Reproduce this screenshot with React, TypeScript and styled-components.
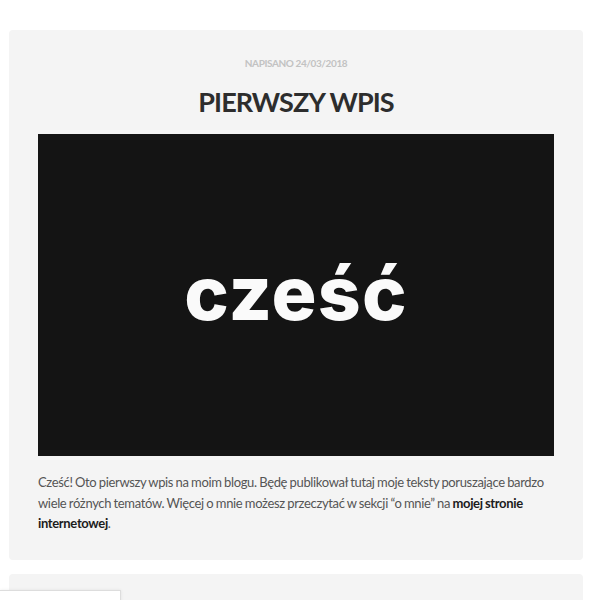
import React from "react";
import styled, { createGlobalStyle } from "styled-components";

const Global = createGlobalStyle`
  html, body { margin: 0; padding: 0; background: #fff; }
  body { font-family: Lato, "Open Sans", sans-serif; overflow: hidden; }
`;

const Page = styled.div`
  padding: 30px 17px 0 9px;
  display: flex;
  flex-direction: column;
  gap: 14px;
`;

const Card = styled.article`
  background: #f4f4f4;
  border-radius: 4px;
  padding: 26px 29px 26px;
`;

const EmptyCard = styled(Card)`
  height: 60px;
`;

const Meta = styled.div`
  text-align: center;
  font-family: Lato, sans-serif;
  font-weight: 700;
  font-size: 10px;
  letter-spacing: -0.4px;
  color: #c2c2c2;
  text-transform: uppercase;
  line-height: 14px;
`;

const Title = styled.h1`
  margin: 15px 0 15px;
  text-align: center;
  font-family: Lato, sans-serif;
  font-weight: 700;
  font-size: 27px;
  line-height: 34px;
  color: #2d2d2d;
  letter-spacing: -0.9px;
`;

const Hero = styled.div`
  height: 322px;
  background: #141414;
  display: flex;
  align-items: center;
  justify-content: center;
`;

const HeroWord = styled.span`
  font-family: Inter, sans-serif;
  font-weight: 800;
  font-size: 75px;
  color: #fafafa;
  letter-spacing: 1.2px;
  line-height: 1;
  padding-bottom: 6px;
`;

const Body = styled.p`
  margin: 16px 0 0;
  font-family: Lato, sans-serif;
  font-size: 13px;
  letter-spacing: -0.35px;
  word-spacing: -0.5px;
  line-height: 20.5px;
  color: #555;
`;

const Strong = styled.strong`
  color: #1c1c1c;
  font-weight: 700;
`;

const Corner = styled.div`
  position: fixed;
  left: 0;
  top: 590px;
  width: 120px;
  height: 30px;
  background: #fff;
  border: 1px solid #ddd;
  border-left: none;
  box-shadow: 0 0 3px rgba(0,0,0,0.08);
`;

export default function App() {
  return (
    <>
      <Global />
      <Page>
        <Card>
          <Meta>Napisano 24/03/2018</Meta>
          <Title>PIERWSZY WPIS</Title>
          <Hero>
            <HeroWord>cześć</HeroWord>
          </Hero>
          <Body>
            Cześć! Oto pierwszy wpis na moim blogu. Będę publikował tutaj moje teksty poruszające bardzo
            wiele różnych tematów. Więcej o mnie możesz przeczytać w sekcji “o mnie” na{" "}
            <Strong>mojej stronie internetowej</Strong>.
          </Body>
        </Card>
        <EmptyCard />
      </Page>
      <Corner />
    </>
  );
}
